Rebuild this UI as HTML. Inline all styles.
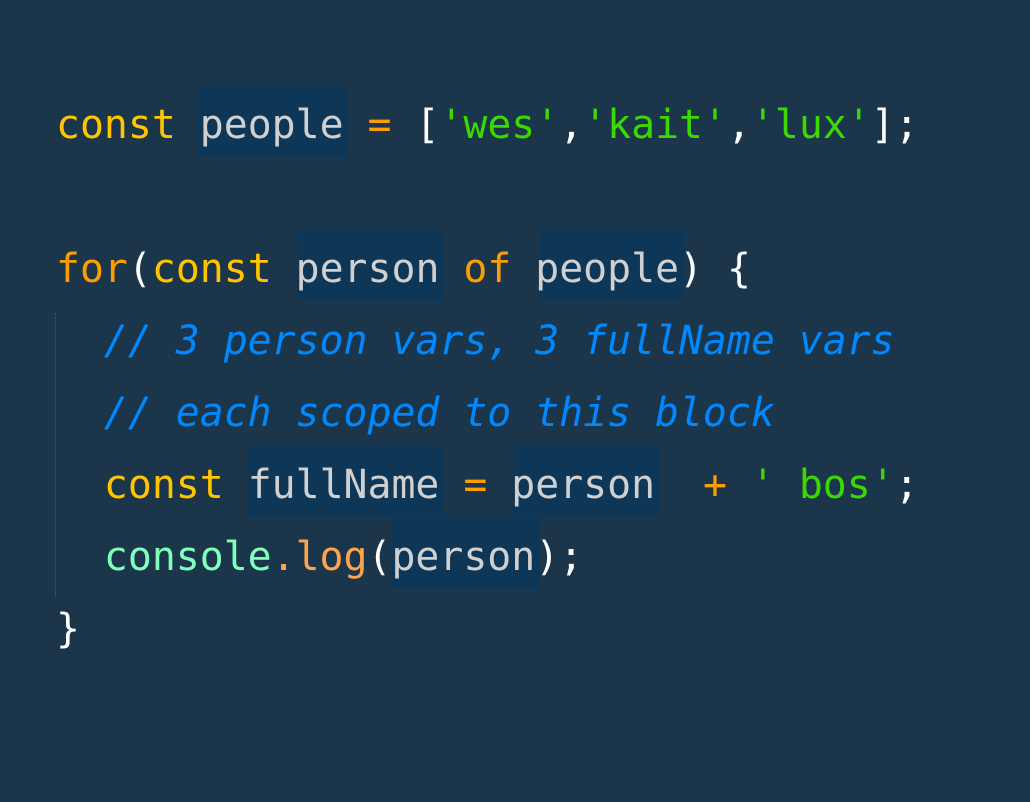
<!DOCTYPE html>
<html><head><meta charset="utf-8"><style>
html,body{margin:0;padding:0;}
body{width:1030px;height:802px;background:#1b354b;position:relative;overflow:hidden;font-family:"DejaVu Sans Mono","Liberation Mono",monospace;font-size:39.8px;}
.l{position:absolute;left:56px;height:72px;line-height:72px;white-space:pre;color:#fff;}
.h{position:absolute;background:#0e3757;height:71px;}
.k{color:#ffc600}.v{color:#d0d0d0}.o{color:#ff9d00}.s{color:#3ad900}.c{color:#0088ff;font-style:italic}.cn{color:#80ffbb}.lg{color:#ffa34d}
.g{position:absolute;left:55px;top:313px;height:284px;border-left:1px dotted #4a5d70;}
</style></head><body>
<div class="h" style="left:198px;top:86px;width:150px"></div>
<div class="h" style="left:297px;top:230px;width:146px"></div>
<div class="h" style="left:539px;top:230px;width:146px"></div>
<div class="h" style="left:247px;top:446px;width:196px"></div>
<div class="h" style="left:513px;top:446px;width:146px"></div>
<div class="h" style="left:392px;top:518px;width:148px"></div>
<div class="g"></div>
<div class="l" style="top:89px"><span class="k">const</span> <span class="v">people</span> <span class="o">=</span> [<span class="s">'wes'</span>,<span class="s">'kait'</span>,<span class="s">'lux'</span>];</div>
<div class="l" style="top:233px"><span class="o">for</span>(<span class="k">const</span> <span class="v">person</span> <span class="o">of</span> <span class="v">people</span>) {</div>
<div class="l" style="top:305px">  <span class="c">// 3 person vars, 3 fullName vars</span></div>
<div class="l" style="top:377px">  <span class="c">// each scoped to this block</span></div>
<div class="l" style="top:449px">  <span class="k">const</span> <span class="v">fullName</span> <span class="o">=</span> <span class="v">person</span>  <span class="o">+</span> <span class="s">' bos'</span>;</div>
<div class="l" style="top:521px">  <span class="cn">console</span><span class="lg">.log</span>(<span class="v">person</span>);</div>
<div class="l" style="top:593px">}</div>
</body></html>
